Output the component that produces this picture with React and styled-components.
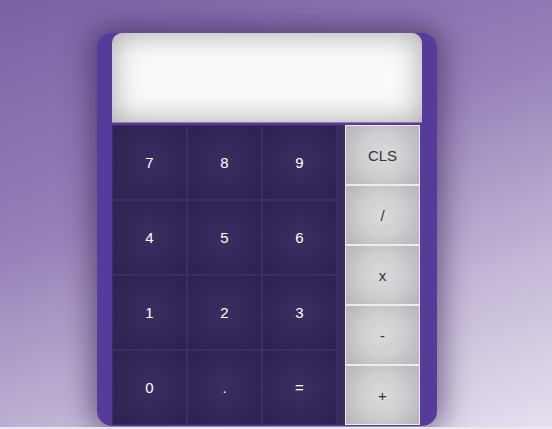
import React from "react";
import styled, { createGlobalStyle } from "styled-components";

const Global = createGlobalStyle`
  html, body { margin: 0; padding: 0; background: #ebe8ef; }
  body { font-family: "Liberation Sans", Arial, sans-serif; }
`;

const Page = styled.div`
  height: 427px;
  padding-top: 33px;
  box-sizing: border-box;
  background: linear-gradient(160deg, #7a61a7 0%, #9580b8 40%, #c7bbd9 75%, #e6e0ef 100%);
  overflow: hidden;
`;

const Calculator = styled.div`
  width: 340px;
  margin-left: 97px;
  box-sizing: border-box;
  padding: 0 15px 1px;
  background: #553c9a;
  border-radius: 15px;
  box-shadow: 0 0 28px 6px rgba(45, 25, 70, 0.55);
`;

const Display = styled.div`
  height: 89px;
  background: #fafafa;
  border-radius: 10px 10px 0 0;
  box-shadow: inset 0 0 30px rgba(0, 0, 0, 0.34);
  margin-bottom: 2px;
  border-bottom: 1px solid #8d7cba;
`;

const Keypad = styled.div`
  display: flex;
  width: 308px;
  height: 300px;
  background: #3a2b60;
`;

const Digits = styled.div`
  display: grid;
  grid-template-columns: repeat(3, 75px);
  grid-template-rows: repeat(4, 75px);
  width: 225px;
`;

const Key = styled.div`
  display: flex;
  align-items: center;
  justify-content: center;
  box-sizing: border-box;
  border: 1px solid #3c2e64;
  background: radial-gradient(circle at center, #3a2d60 0%, #2d2151 100%);
  color: #ffffff;
  font-size: 15px;
`;

const Operators = styled.div`
  display: flex;
  flex-direction: column;
  margin-left: 8px;
  width: 75px;
`;

const OpKey = styled.div`
  height: 60px;
  display: flex;
  align-items: center;
  justify-content: center;
  box-sizing: border-box;
  border: 1px solid #ececec;
  background: radial-gradient(circle at center, #dadadc 0%, #cfcfd2 45%, #b4b4b6 100%);
  color: #333333;
  font-size: 15px;
`;

const digits = ["7", "8", "9", "4", "5", "6", "1", "2", "3", "0", ".", "="];
const ops = ["CLS", "/", "x", "-", "+"];

export default function App() {
  return (
    <>
      <Global />
      <Page>
        <Calculator>
          <Display />
          <Keypad>
            <Digits>
              {digits.map((d, i) => (
                <Key key={i}>{d}</Key>
              ))}
            </Digits>
            <Operators>
              {ops.map((o) => (
                <OpKey key={o}>{o}</OpKey>
              ))}
            </Operators>
          </Keypad>
        </Calculator>
      </Page>
    </>
  );
}
